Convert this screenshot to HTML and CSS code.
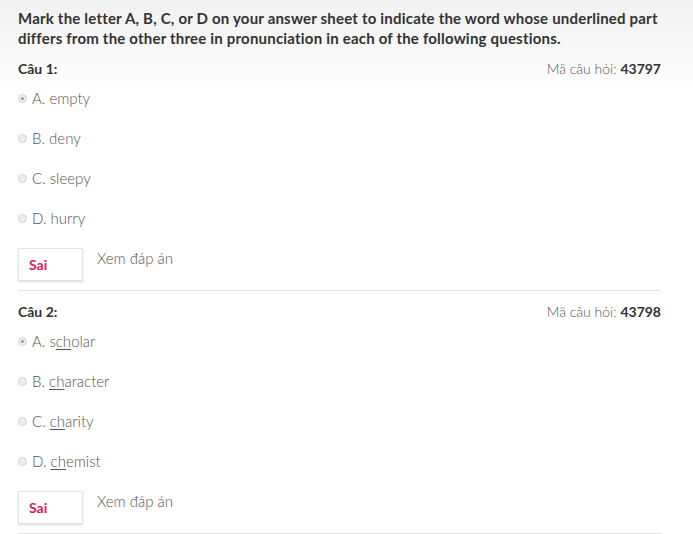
FILE: index.html
```html
<!DOCTYPE html>
<html>
<head>
<meta charset="utf-8">
<link rel="stylesheet" href="styles.css">
</head>
<body>
<div class="page">
  <div class="intro">Mark the letter A, B, C, or D on your answer sheet to indicate the word whose underlined part differs from the other three in pronunciation in each of the following questions.</div>

  <div class="question">
    <div class="q-head"><span class="q-title">Câu 1:</span><span class="q-code">Mã câu hỏi: <b>43797</b></span></div>
    <div class="opt"><span class="radio checked"></span><span>A. empty</span></div>
    <div class="opt"><span class="radio"></span><span>B. deny</span></div>
    <div class="opt"><span class="radio"></span><span>C. sleepy</span></div>
    <div class="opt"><span class="radio"></span><span>D. hurry</span></div>
    <div class="actions"><div class="result">Sai</div><span class="show">Xem đáp án</span></div>
  </div>

  <div class="question">
    <div class="q-head"><span class="q-title">Câu 2:</span><span class="q-code">Mã câu hỏi: <b>43798</b></span></div>
    <div class="opt"><span class="radio checked"></span><span>A. s<u>ch</u>olar</span></div>
    <div class="opt"><span class="radio"></span><span>B. <u>ch</u>aracter</span></div>
    <div class="opt"><span class="radio"></span><span>C. <u>ch</u>arity</span></div>
    <div class="opt"><span class="radio"></span><span>D. <u>ch</u>emist</span></div>
    <div class="actions"><div class="result">Sai</div><span class="show">Xem đáp án</span></div>
  </div>
</div>
</body>
</html>
```

FILE: styles.css
```css
html, body {
  margin: 0;
  padding: 0;
}
body {
  background: linear-gradient(#f0f0f0 0px, #fafafa 60px, #ffffff 95px) no-repeat;
  min-height: 534px;
  font-family: Lato, "Open Sans", sans-serif;
  color: #333;
}
.page {
  width: 643px;
  padding: 8px 0 0 18px;
}
.intro {
  font-size: 15px;
  line-height: 20px;
  font-weight: 700;
  letter-spacing: 0.2px;
  margin-right: -4px;
  color: #333;
}
.question {
  padding-top: 10px;
  border-bottom: 1px solid #e3e3e3;
}
.q-head {
  display: flex;
  justify-content: space-between;
  align-items: center;
  height: 20px;
  font-size: 14px;
}
.q-title {
  font-weight: 700;
}
.q-code {
  color: #555;
  font-weight: 300;
}
.q-code b {
  color: #333;
  font-weight: 700;
}
.opt {
  display: flex;
  align-items: center;
  height: 20px;
  margin-top: 20px;
  font-size: 15px;
  color: #555;
  font-weight: 300;
}
.q-head + .opt {
  margin-top: 10px;
}
.radio {
  width: 9px;
  height: 9px;
  border-radius: 50%;
  border: 1px solid #d4d4d4;
  background: #ececec;
  margin-right: 5px;
  position: relative;
  box-sizing: border-box;
}
.radio.checked::after {
  content: "";
  position: absolute;
  left: 2px;
  top: 2px;
  width: 3px;
  height: 3px;
  border-radius: 50%;
  background: #9a9a9a;
}
.opt u {
  text-decoration-thickness: 1px;
  text-underline-offset: 2px;
}
.actions {
  display: flex;
  align-items: flex-start;
  margin-top: 20px;
  padding-bottom: 9px;
}
.result {
  width: 65px;
  height: 33px;
  box-sizing: border-box;
  border: 1px solid #e2e2e2;
  box-shadow: 0 1px 2px rgba(0,0,0,0.15);
  background: #fff;
  color: #d81b5a;
  font-weight: 700;
  font-size: 14px;
  line-height: 31px;
  padding-left: 10px;
}
.show {
  margin-left: 14px;
  font-size: 15px;
  line-height: 20px;
  color: #555;
  font-weight: 300;
}
```
